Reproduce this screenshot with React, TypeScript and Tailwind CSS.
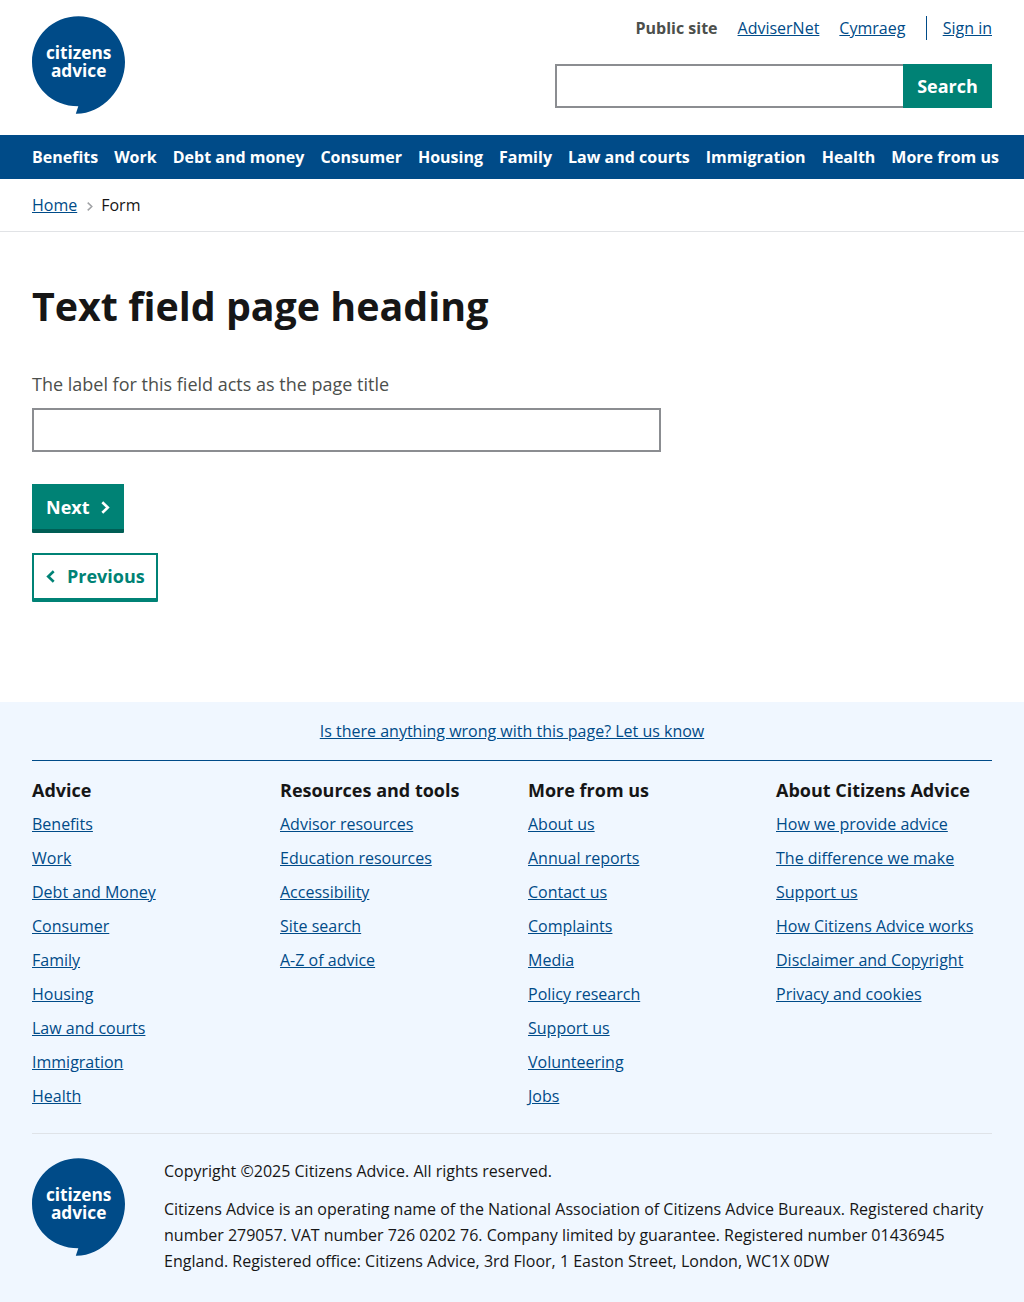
const navItems = [
  'Benefits', 'Work', 'Debt and money', 'Consumer', 'Housing',
  'Family', 'Law and courts', 'Immigration', 'Health', 'More from us',
];

const footerColumns = [
  {
    title: 'Advice',
    links: ['Benefits', 'Work', 'Debt and Money', 'Consumer', 'Family', 'Housing', 'Law and courts', 'Immigration', 'Health'],
  },
  {
    title: 'Resources and tools',
    links: ['Advisor resources', 'Education resources', 'Accessibility', 'Site search', 'A-Z of advice'],
  },
  {
    title: 'More from us',
    links: ['About us', 'Annual reports', 'Contact us', 'Complaints', 'Media', 'Policy research', 'Support us', 'Volunteering', 'Jobs'],
  },
  {
    title: 'About Citizens Advice',
    links: ['How we provide advice', 'The difference we make', 'Support us', 'How Citizens Advice works', 'Disclaimer and Copyright', 'Privacy and cookies'],
  },
];

function Link({ children }: { children: string }) {
  return (
    <a href="#" className="text-[#004b88] underline">
      {children}
    </a>
  );
}

function Logo() {
  return (
    <svg width="93" height="98" viewBox="0 0 93 98" className="block shrink-0" role="img" aria-label="Citizens Advice">
      <path
        d="M46.5 0.3C20.8 0.3 0 20.5 0 46C0 70.5 19.500 90.300 46.300 90.300L43.800 97.800C70 98.200 93 73 93 46C93 20.500 72.200 0.300 46.500 0.300Z"
        fill="#004b88"
      />
      <g fill="#fff" fontFamily="'Open Sans', sans-serif" fontWeight="700" fontSize="18">
        <text x="13.900" y="43.300" textLength="65.500" lengthAdjust="spacingAndGlyphs">citizens</text>
        <text x="18.900" y="61.300" textLength="55.500" lengthAdjust="spacingAndGlyphs">advice</text>
      </g>
    </svg>
  );
}

function Header() {
  return (
    <header className="flex h-[135px] items-start justify-between px-8 pt-4">
      <Logo />
      <div className="flex flex-col items-end gap-6">
        <div className="flex h-6 items-center leading-6">
          <strong className="mr-5 font-bold text-[#4c4f4c]">Public site</strong>
          <span className="mr-5"><Link>AdviserNet</Link></span>
          <span className="mr-[20.3px]"><Link>Cymraeg</Link></span>
          <span className="border-l border-[#004b88] pl-4"><Link>Sign in</Link></span>
        </div>
        <form className="flex h-11">
          <input aria-label="Search" className="w-[348px] border-2 border-r-0 border-[#8b8d91] bg-white px-2 outline-none" />
          <button type="button" className="w-[89px] bg-[#008275] text-lg font-bold text-white">
            Search
          </button>
        </form>
      </div>
    </header>
  );
}

function Footer() {
  return (
    <footer className="h-[600px] bg-[#f0f7ff] px-8">
      <div className="flex h-[59px] items-center justify-center border-b border-[#004b88]">
        <Link>Is there anything wrong with this page? Let us know</Link>
      </div>
      <div className="grid h-[373px] grid-cols-4 gap-x-8 border-b border-[#dfe3e8] pt-4">
        {footerColumns.map((column) => (
          <section key={column.title}>
            <h2 className="text-lg leading-[27px] font-bold whitespace-nowrap">{column.title}</h2>
            <ul className="mt-[7px]">
              {column.links.map((link) => (
                <li key={link} className="mb-2 leading-[26px] whitespace-nowrap">
                  <Link>{link}</Link>
                </li>
              ))}
            </ul>
          </section>
        ))}
      </div>
      <div className="flex gap-[39px] pt-6">
        <Logo />
        <div className="leading-[26px]">
          <p className="mb-3">Copyright ©2025 Citizens Advice. All rights reserved.</p>
          <p>
            Citizens Advice is an operating name of the National Association of Citizens Advice Bureaux. Registered charity
            number 279057. VAT number 726 0202 76. Company limited by guarantee. Registered number 01436945 England.
            Registered office: Citizens Advice, 3rd Floor, 1 Easton Street, London, WC1X 0DW
          </p>
        </div>
      </div>
    </footer>
  );
}

export default function App() {
  return (
    <div className="w-full overflow-hidden bg-white font-['Open_Sans',sans-serif] text-base text-[#161616]">
      <Header />
      <nav className="flex h-11 items-center gap-4 bg-[#004b88] px-8 font-bold whitespace-nowrap text-white">
        {navItems.map((item) => (
          <a key={item} href="#">{item}</a>
        ))}
      </nav>
      <div className="flex h-[53px] items-center border-b border-[#e1e3e6] px-8">
        <Link>Home</Link>
        <svg width="6" height="9" viewBox="0 0 6 9" className="mt-[3px] mr-[8px] ml-[10px]" fill="none" stroke="#a0a2a5" strokeWidth="1.500">
          <path d="M0.700 0.600L4.800 4.500L0.700 8.400" />
        </svg>
        <span>Form</span>
      </div>
      <main className="h-[470px] px-8 pt-12">
        <h1 className="text-[39.4px] leading-[52px] font-bold">Text field page heading</h1>
        <label htmlFor="field" className="mt-[39px] block text-lg leading-[27px] text-[#4c4f4c]">
          The label for this field acts as the page title
        </label>
        <input id="field" className="mt-[10px] block h-11 w-[629px] border-2 border-[#8b8d91] px-2 outline-none" />
        <button
          type="button"
          className="mt-8 flex h-[49px] w-[92px] items-center rounded-b-[1px] border-b-4 border-[#005e55] bg-[#008275] pt-[1px] pl-[14px] text-lg font-bold text-white"
        >
          Next
          <svg width="9" height="13" viewBox="0 0 9 13" className="mt-[1px] ml-[11px]" fill="none" stroke="currentColor" strokeWidth="2.600">
            <path d="M1.300 1.200L6.800 6.500L1.300 11.800" />
          </svg>
        </button>
        <button
          type="button"
          className="mt-5 flex h-[49px] w-[126px] items-center rounded-b-[1px] border-2 border-b-4 border-[#008275] bg-white pb-[2px] pl-3 text-lg font-bold text-[#008275]"
        >
          <svg width="9" height="13" viewBox="0 0 9 13" className="mt-[2px] mr-3" fill="none" stroke="currentColor" strokeWidth="2.600">
            <path d="M7.700 1.200L2.200 6.500L7.700 11.800" />
          </svg>
          Previous
        </button>
      </main>
      <Footer />
    </div>
  );
}
